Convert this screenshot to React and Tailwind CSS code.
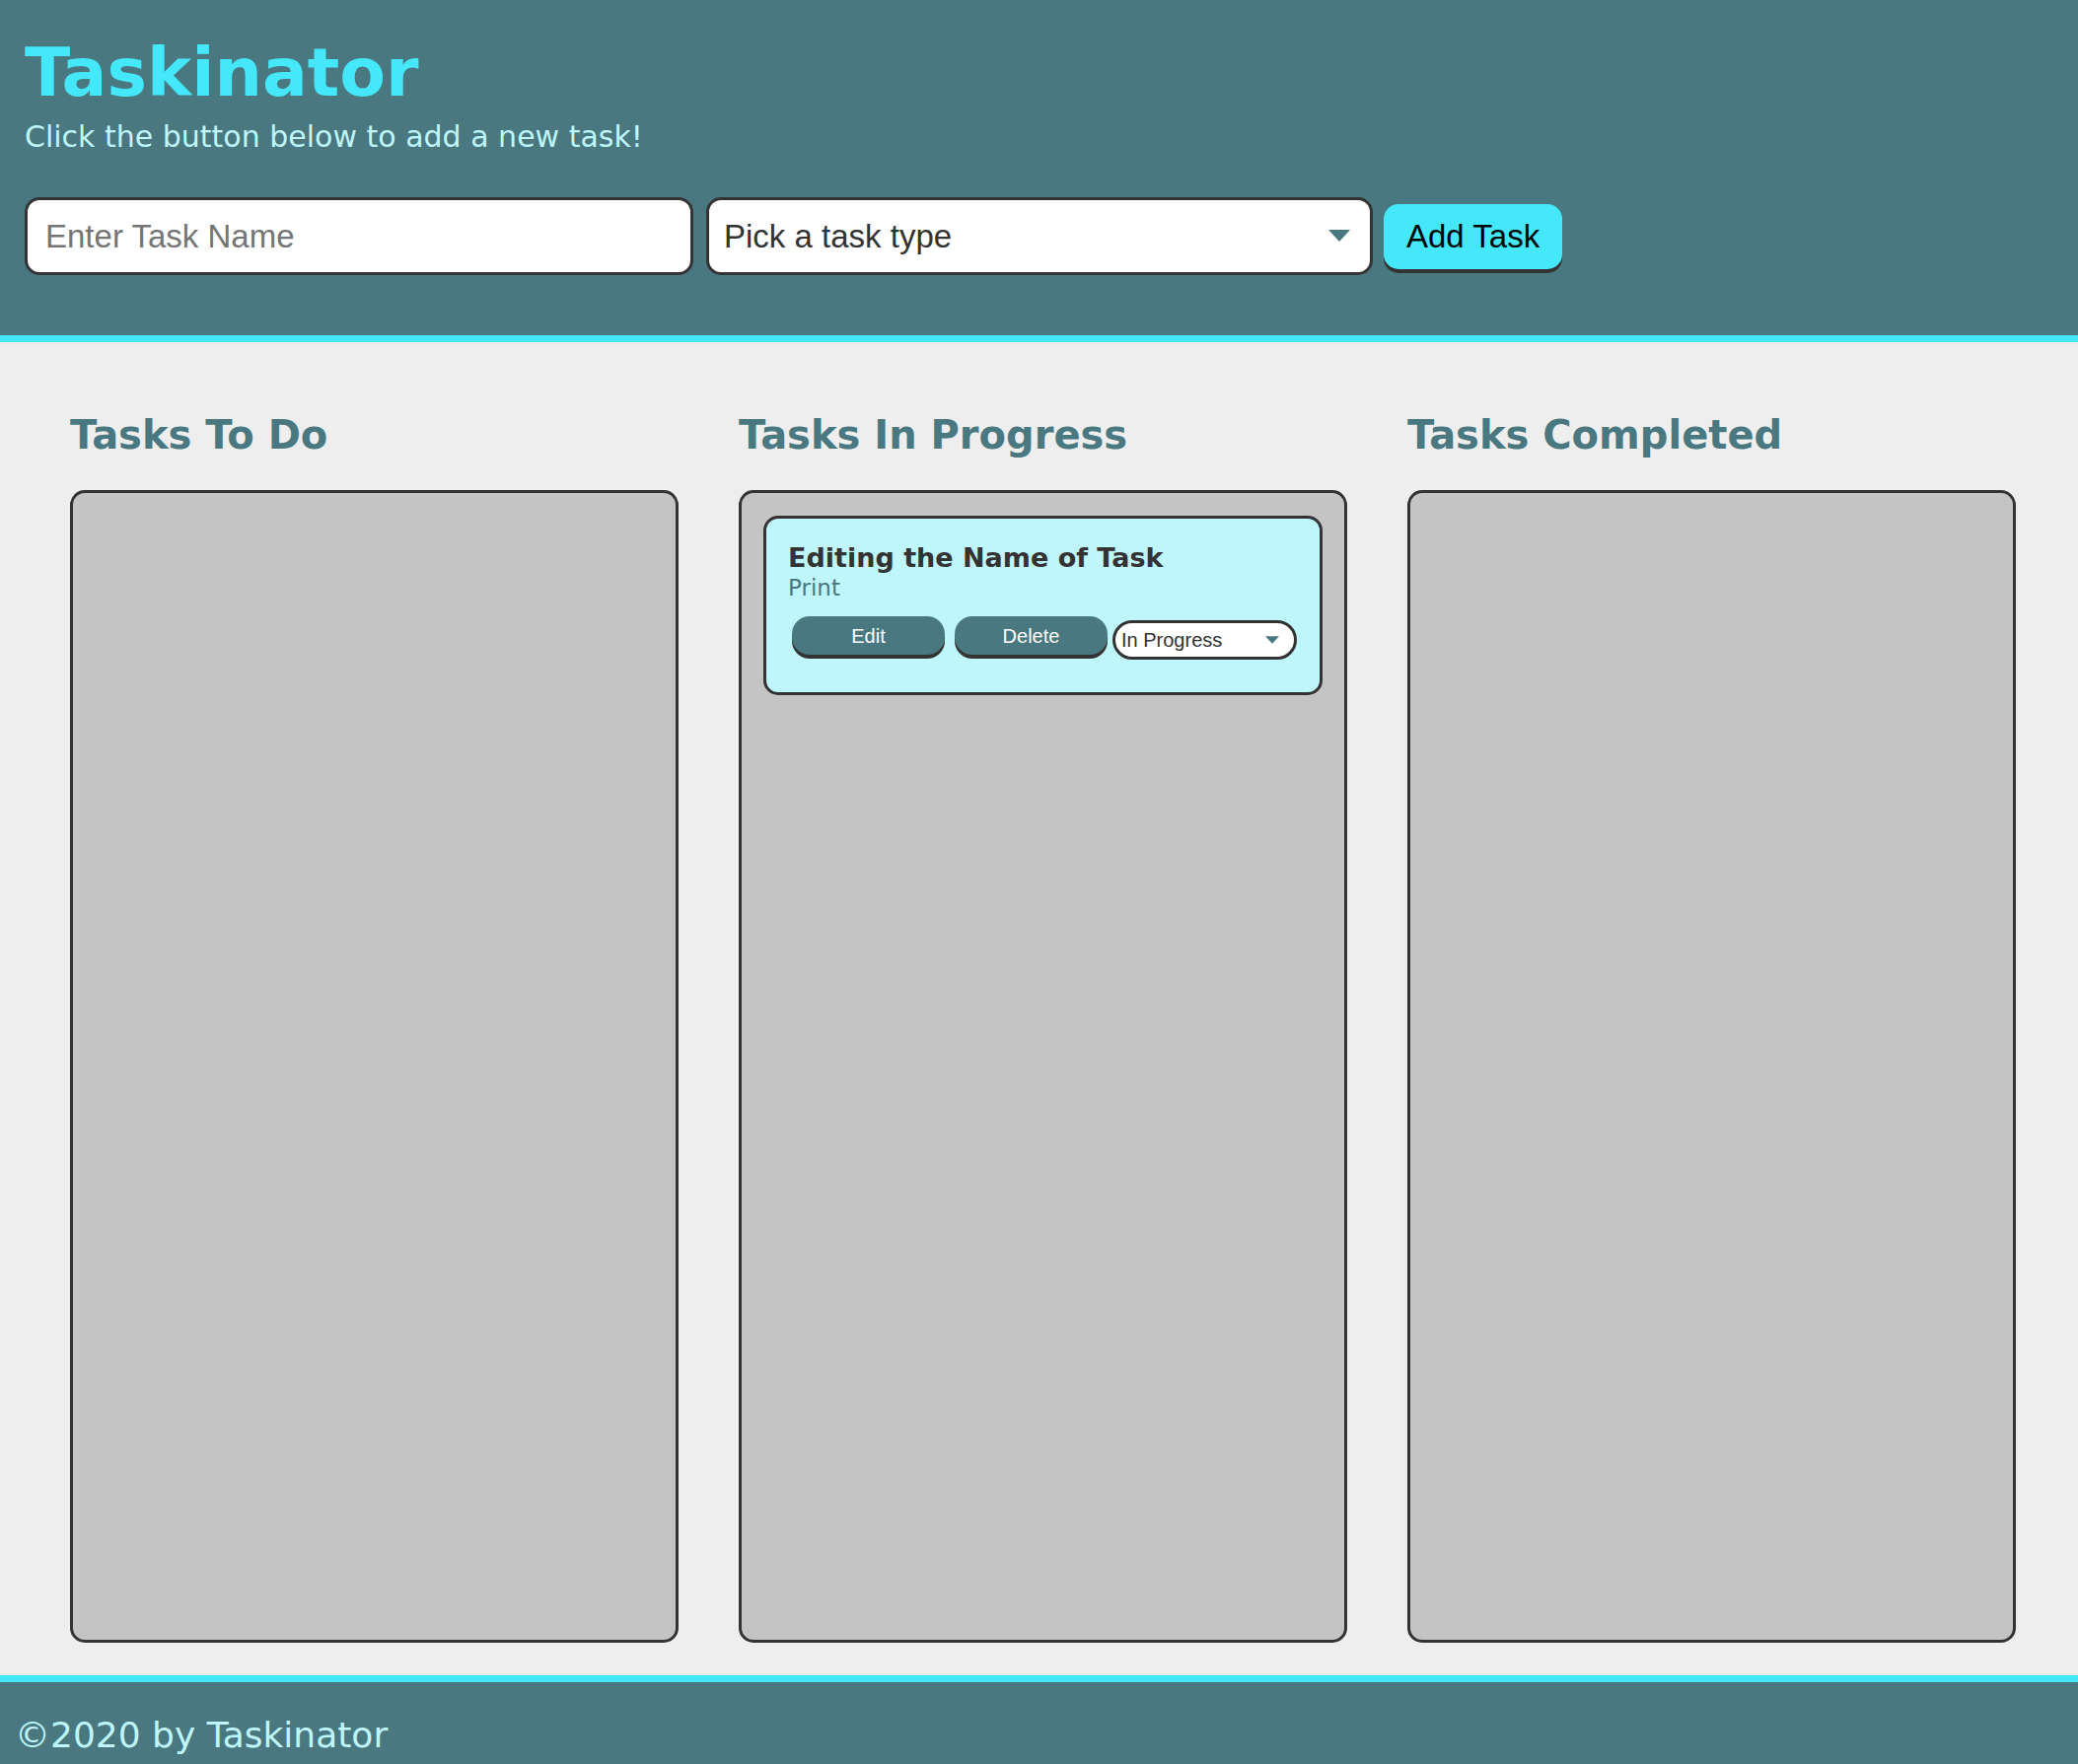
import { useState } from "react";

const columns = [
  { title: "Tasks To Do", key: "to do" },
  { title: "Tasks In Progress", key: "in progress" },
  { title: "Tasks Completed", key: "completed" },
];

function Arrow({ className }) {
  return (
    <svg className={className} viewBox="0 0 22 12">
      <polygon points="0,0 22,0 11,12" fill="#497880" />
    </svg>
  );
}

function TaskCard({ task }) {
  return (
    <div className="mx-[22px] mt-[23px] rounded-[15px] border-[3px] border-[#333333] bg-[#bff6fb] px-[22px] pt-[26px] pb-[33px]">
      <h3 className="text-[27px] leading-none font-bold text-[#333333]">{task.name}</h3>
      <p className="mt-[6px] text-[23px] leading-none text-[#497880]">{task.type}</p>
      <div className="mt-[17px] ml-[4px] flex items-start font-['Liberation_Sans',Arial,sans-serif]">
        <button className="h-[39px] w-[155px] rounded-[18px] bg-[#497880] text-[20px] text-white shadow-[0_4px_0_#333333]">Edit</button>
        <button className="ml-[10px] h-[39px] w-[155px] rounded-[18px] bg-[#497880] text-[20px] text-white shadow-[0_4px_0_#333333]">Delete</button>
        <div className="relative mt-[4px] ml-[5px]">
          <select
            defaultValue="in progress"
            className="h-[40px] w-[187px] appearance-none rounded-[20px] border-[3px] border-[#333333] bg-white pl-[6px] text-[20px] text-[#333333] outline-none"
          >
            <option value="to do">To Do</option>
            <option value="in progress">In Progress</option>
            <option value="completed">Completed</option>
          </select>
          <Arrow className="pointer-events-none absolute top-[16px] right-[18px] h-[8px] w-[14px]" />
        </div>
      </div>
    </div>
  );
}

export default function App() {
  const [tasks] = useState([
    { id: 1, name: "Editing the Name of Task", type: "Print", status: "in progress" },
  ]);

  return (
    <div className="min-h-screen bg-[#eeeeee] font-['DejaVu_Sans',Verdana,sans-serif]">
      <header className="border-b-[7px] border-[#45e8fa] bg-[#497880] px-[25px] pt-[40px] pb-[61px]">
        <h1 className="text-[68px] leading-none font-bold text-[#45e8fa]">Taskinator</h1>
        <p className="mt-[16px] text-[30px] leading-none text-[#bff6fb]">Click the button below to add a new task!</p>
        <form className="mt-[46px] flex items-center font-['Liberation_Sans',Arial,sans-serif]" onSubmit={e => e.preventDefault()}>
          <input
            type="text"
            placeholder="Enter Task Name"
            className="h-[79px] w-[678px] rounded-[15px] border-[3px] border-[#333333] bg-white px-[18px] text-[33px] text-[#333333] outline-none placeholder:text-[#757575]"
          />
          <div className="relative ml-[13px]">
            <select
              defaultValue=""
              className="h-[79px] w-[676px] appearance-none rounded-[15px] border-[3px] border-[#333333] bg-white px-[15px] text-[33px] text-[#333333] outline-none"
            >
              <option value="" disabled>Pick a task type</option>
              <option value="Web">Web</option>
              <option value="Mobile">Mobile</option>
              <option value="Print">Print</option>
            </select>
            <Arrow className="pointer-events-none absolute top-[33px] right-[23px] h-[12px] w-[22px]" />
          </div>
          <button className="ml-[11px] h-[66px] rounded-[15px] bg-[#45e8fa] px-[23px] text-[33px] text-black shadow-[0_4px_0_#333333]">Add Task</button>
        </form>
      </header>

      <main className="flex gap-[61px] pt-[71px] pr-[62px] pb-[33px] pl-[71px]">
        {columns.map(col => (
          <section key={col.key} className="w-[617px]">
            <h2 className="text-[40px] leading-[47px] font-bold text-[#497880]">{col.title}</h2>
            <div className="mt-[32px] h-[1169px] rounded-[15px] border-[3px] border-[#333333] bg-[#c4c4c4]">
              {tasks.filter(t => t.status === col.key).map(t => (
                <TaskCard key={t.id} task={t} />
              ))}
            </div>
          </section>
        ))}
      </main>

      <footer className="border-t-[7px] border-[#45e8fa] bg-[#497880] px-[15px] pt-[36px] pb-[36px]">
        <p className="text-[36px] leading-none text-[#bff6fb]">©2020 by Taskinator</p>
      </footer>
    </div>
  );
}
